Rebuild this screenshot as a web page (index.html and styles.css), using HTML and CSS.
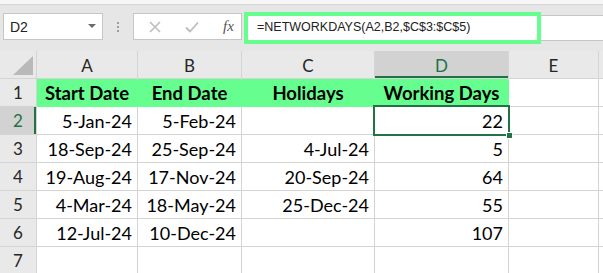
FILE: index.html
```html
<!DOCTYPE html>
<html lang="en">
  <head>
    <meta charset="UTF-8" />
    <meta name="viewport" content="width=device-width, initial-scale=1.0" />
    <title>NETWORKDAYS</title>
    <link rel="stylesheet" href="styles.css">
  </head>
  <body>
    <div class="ribbon-edge"></div>
    <div class="toolbar">
      <div class="name-box">
        <span>D2</span>
        <svg class="caret" width="8" height="5" viewBox="0 0 8 5"><path d="M0 0h8L4 4z" fill="#6b6b6b"/></svg>
      </div>
      <div class="grip"><i></i><i></i><i></i></div>
      <div class="fx-box">
        <svg width="12" height="12" viewBox="0 0 12 12"><path d="M1 1l10 10M11 1L1 11" stroke="#bdbdbd" stroke-width="1.6" fill="none"/></svg>
        <svg width="14" height="12" viewBox="0 0 14 12"><path d="M1 6.5l4 4L13 1.5" stroke="#bdbdbd" stroke-width="1.8" fill="none"/></svg>
        <span class="fx">fx</span>
      </div>
      <div class="formula-bar">
        <div class="formula-text">=NETWORKDAYS(A2,B2,$C$3:$C$5)</div>
      </div>
    </div>

    <div class="sheet">
      <div class="corner"><span class="tri"></span></div>
      <div class="col-head">A</div>
      <div class="col-head">B</div>
      <div class="col-head">C</div>
      <div class="col-head active">D</div>
      <div class="col-head">E</div>
      <div class="col-head"></div>

      <div class="row-head">1</div>
      <div class="cell title">Start Date</div>
      <div class="cell title">End Date</div>
      <div class="cell title">Holidays</div>
      <div class="cell title">Working Days</div>
      <div class="cell"></div>
      <div class="cell"></div>

      <div class="row-head active">2</div>
      <div class="cell">5-Jan-24</div>
      <div class="cell">5-Feb-24</div>
      <div class="cell"></div>
      <div class="cell selected">22</div>
      <div class="cell"></div>
      <div class="cell"></div>

      <div class="row-head">3</div>
      <div class="cell">18-Sep-24</div>
      <div class="cell">25-Sep-24</div>
      <div class="cell">4-Jul-24</div>
      <div class="cell">5</div>
      <div class="cell"></div>
      <div class="cell"></div>

      <div class="row-head">4</div>
      <div class="cell">19-Aug-24</div>
      <div class="cell">17-Nov-24</div>
      <div class="cell">20-Sep-24</div>
      <div class="cell">64</div>
      <div class="cell"></div>
      <div class="cell"></div>

      <div class="row-head">5</div>
      <div class="cell">4-Mar-24</div>
      <div class="cell">18-May-24</div>
      <div class="cell">25-Dec-24</div>
      <div class="cell">55</div>
      <div class="cell"></div>
      <div class="cell"></div>

      <div class="row-head">6</div>
      <div class="cell">12-Jul-24</div>
      <div class="cell">10-Dec-24</div>
      <div class="cell"></div>
      <div class="cell">107</div>
      <div class="cell"></div>
      <div class="cell"></div>

      <div class="row-head">7</div>
      <div class="cell"></div>
      <div class="cell"></div>
      <div class="cell"></div>
      <div class="cell"></div>
      <div class="cell"></div>
      <div class="cell"></div>
    </div>
  </body>
</html>
```

FILE: styles.css
```css
html,
body {
  margin: 0;
  height: 100%;
  overflow: hidden;
}
body {
  background-color: #e6e6e6;
  font-family: "Lato", "Liberation Sans", sans-serif;
  color: #000;
}
.ribbon-edge {
  height: 4px;
  background-color: #f6f6f6;
  border-bottom: 1px solid #d5d5d5;
}
.toolbar {
  display: flex;
  align-items: flex-start;
  height: 46px;
  padding-top: 8px;
  box-sizing: border-box;
}
.name-box {
  display: flex;
  align-items: center;
  justify-content: space-between;
  box-sizing: border-box;
  margin-left: 3px;
  width: 100px;
  height: 27px;
  padding: 0 6px 0 6px;
  background-color: #fff;
  border: 1px solid #c6c6c6;
  font-family: "Liberation Sans", sans-serif;
  font-size: 14px;
  color: #222;
}
.grip {
  display: flex;
  flex-direction: column;
  gap: 2px;
  margin: 9px 14px 0 14px;
}
.grip i {
  width: 2px;
  height: 2px;
  background-color: #9c9c9c;
}
.fx-box {
  display: flex;
  align-items: center;
  box-sizing: border-box;
  width: 109px;
  height: 27px;
  padding-left: 15px;
  gap: 24px;
  background-color: #fff;
  border: 1px solid #c6c6c6;
}
.fx {
  font-family: "Liberation Serif", serif;
  font-style: italic;
  font-size: 15px;
  color: #555;
}
.formula-bar {
  flex: 1;
  box-sizing: border-box;
  height: 26px;
  margin: 2px 0 0 2px;
  background-color: #fff;
  border-top: 1px solid #c6c6c6;
  border-bottom: 1px solid #c6c6c6;
}
.formula-text {
  box-sizing: border-box;
  width: 297px;
  height: 32px;
  margin-top: -4px;
  padding: 4px 0 0 9px;
  border: 4px solid #66ff8f;
  background-color: #fff;
  font-family: "Liberation Sans", sans-serif;
  font-size: 12.5px;
  color: #222;
  white-space: nowrap;
}

.sheet {
  display: grid;
  grid-template-columns: 36px 100px 103px 132px 133px 89px 1fr;
  grid-auto-rows: 27px;
  gap: 1px;
  background-color: #d4d4d4;
  font-size: 18px;
}
.corner,
.col-head,
.row-head {
  display: flex;
  align-items: center;
  justify-content: center;
  background-color: #e9e9e9;
  color: #262626;
  font-size: 17px;
}
.corner {
  position: relative;
}
.tri {
  position: absolute;
  right: 3px;
  bottom: 3px;
  width: 0;
  height: 0;
  border-left: 20px solid transparent;
  border-bottom: 19px solid #b9b9b9;
}
.col-head {
  padding-top: 2px;
}
.col-head.active {
  background-color: #d2d2d2;
  color: #217346;
  box-shadow: inset 0 -2px 0 #217346;
}
.row-head.active {
  background-color: #d2d2d2;
  color: #217346;
  box-shadow: inset -2px 0 0 #217346;
}
.cell {
  display: flex;
  align-items: flex-end;
  justify-content: flex-end;
  padding: 0 5px 2px 0;
  background-color: #fff;
  white-space: nowrap;
}
.cell.title {
  justify-content: center;
  padding: 0 0 2px 0;
  background-color: #66ff8f;
  box-shadow: 1px 1px 0 #66ff8f;
  font-size: 18.5px;
  font-weight: bold;
}
.cell.selected {
  position: relative;
  z-index: 1;
  outline: 2px solid #217346;
}
.cell.selected::after {
  content: "";
  position: absolute;
  right: -5px;
  bottom: -5px;
  width: 5px;
  height: 5px;
  background-color: #217346;
  border: 1px solid #fff;
}
```
